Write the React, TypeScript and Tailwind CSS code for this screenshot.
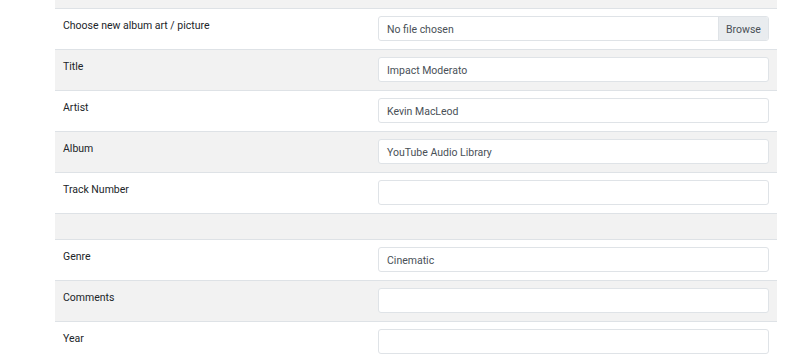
import React from "react";

type Row = { label: string; value?: string; file?: boolean; spacer?: boolean };

const rows: Row[] = [
  { label: "Choose new album art / picture", file: true },
  { label: "Title", value: "Impact Moderato" },
  { label: "Artist", value: "Kevin MacLeod" },
  { label: "Album", value: "YouTube Audio Library" },
  { label: "Track Number", value: "" },
  { label: "", spacer: true },
  { label: "Genre", value: "Cinematic" },
  { label: "Comments", value: "" },
  { label: "Year", value: "" },
];

function App() {
  return (
    <div
      className="w-[800px] h-[357px] overflow-hidden bg-white text-[#212529]"
      style={{ fontFamily: 'Roboto, Lato, sans-serif' }}
    >
      <div className="ml-[55px] w-[722px] flex flex-col">
        <div className="h-[9px] bg-[#f2f2f2] border-b border-[#dee2e6]" />
        {rows.map((row, i) => {
          const striped = i % 2 === 1;
          return (
            <div
              key={i}
              className={`flex border-b border-[#dee2e6] ${striped ? "bg-[#f2f2f2]" : "bg-white"} ${row.spacer ? "h-[26px]" : "h-[41px]"}`}
            >
              <div className="w-[315px] px-2 pt-[8px] text-[10.5px] leading-[18px]">
                {row.label}
              </div>
              {!row.spacer && (
                <div className="flex-1 px-2 pt-[7px]">
                  {row.file ? (
                    <div className="flex h-[25px] rounded-[3px] border border-[#dfe3e7] bg-white overflow-hidden">
                      <div className="flex-1 pl-[8px] pt-[2px] flex items-center text-[10.5px] text-[#495057]">
                        No file chosen
                      </div>
                      <div className="w-[50px] pt-[2px] flex items-center justify-center bg-[#e9ecef] border-l border-[#dfe3e7] text-[10.5px] text-[#495057]">
                        Browse
                      </div>
                    </div>
                  ) : (
                    <div className="h-[25px] rounded-[3px] border border-[#dfe3e7] bg-white pl-[8px] pt-[2px] flex items-center text-[10.5px] text-[#495057]">
                      {row.value}
                    </div>
                  )}
                </div>
              )}
            </div>
          );
        })}
      </div>
    </div>
  );
}

export default App;
